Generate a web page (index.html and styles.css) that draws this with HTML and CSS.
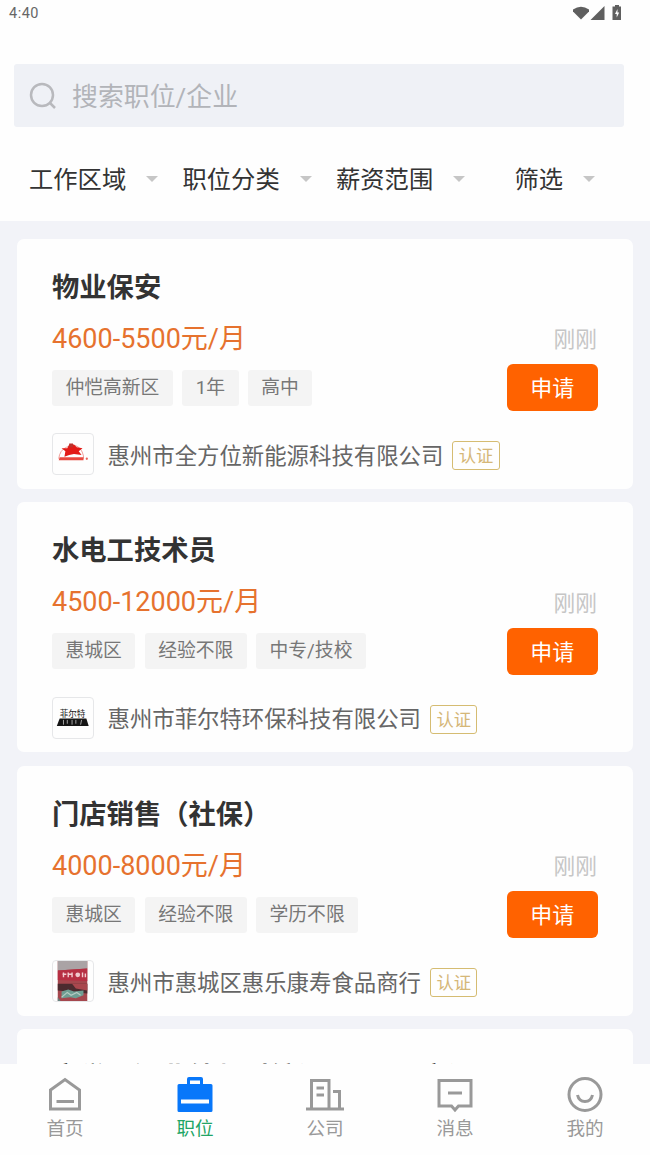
FILE: index.html
```html
<!DOCTYPE html>
<html lang="zh-CN">
<head>
<meta charset="utf-8">
<title>职位</title>
<link rel="stylesheet" href="styles.css">
</head>
<body>
<div class="app">
  <header class="top">
    <div class="status">
      <span>4:40</span>
      <svg class="status-icons" width="52" height="18" viewBox="0 0 52 18">
        <path d="M0 4.500Q8 -1 16 4.500V6.500L8 14.500 0 6.500Z"/>
        <path d="M31.500 1V15H17.500Z"/>
        <path fill-rule="evenodd" d="M42 1.500V0H46V1.500H48V15H39.500V1.500ZM44.500 4 42 9H43.700V12.500L46.200 7.500H44.500Z"/>
      </svg>
    </div>
    <div class="search">
      <svg width="28" height="28" viewBox="0 0 28 28"><circle cx="13" cy="13" r="11"/><path d="M20.500 20.500l5.500 5.500"/></svg>
      <span>搜索职位/企业</span>
    </div>
    <nav class="filters">
      <span class="filter">工作区域<i class="caret"></i></span>
      <span class="filter">职位分类<i class="caret"></i></span>
      <span class="filter">薪资范围<i class="caret"></i></span>
      <span class="filter last">筛选<i class="caret"></i></span>
    </nav>
  </header>

  <main class="list">
    <article class="card">
      <h2>物业保安</h2>
      <div class="row pay-row"><span class="pay">4600-5500元/月</span><span class="time">刚刚</span></div>
      <div class="row"><div class="tags"><span>仲恺高新区</span><span>1年</span><span>高中</span></div><button class="apply">申请</button></div>
      <div class="company">
        <svg class="logo" viewBox="0 0 42 42"><path d="M6 26q1-9 8-12 5-3 9-2 7 2 9 11v3" fill="none" stroke="#ef9c98" stroke-width="1"/><path d="M7 24.500H32V27.500H6Z" fill="#e8483f"/><path d="M9 15l6 0 2-4h5l3 3 6 1-4 3 3 4-8-1-5 1-5 2 1-6Z" fill="#e31b17"/><path d="M17 10h4v4h-4z" fill="#b9342e"/><circle cx="35.500" cy="26" r="1.200" fill="#e8655e"/></svg>
        <span class="name">惠州市全方位新能源科技有限公司</span><span class="badge">认证</span>
      </div>
    </article>
    <article class="card">
      <h2>水电工技术员</h2>
      <div class="row pay-row"><span class="pay">4500-12000元/月</span><span class="time">刚刚</span></div>
      <div class="row"><div class="tags"><span>惠城区</span><span>经验不限</span><span>中专/技校</span></div><button class="apply">申请</button></div>
      <div class="company">
        <svg class="logo" viewBox="0 0 42 42"><text class="logo-text" x="7" y="20">菲尔特</text><path d="M7 21.500H35L37.500 29.500H4Z" fill="#151515"/><path d="M11 23v5M15 23v4M20 23v5M24 23v4M30 23l-1 5" stroke="#aaa" stroke-width="1"/></svg>
        <span class="name">惠州市菲尔特环保科技有限公司</span><span class="badge">认证</span>
      </div>
    </article>
    <article class="card">
      <h2>门店销售（社保）</h2>
      <div class="row pay-row"><span class="pay">4000-8000元/月</span><span class="time">刚刚</span></div>
      <div class="row"><div class="tags"><span>惠城区</span><span>经验不限</span><span>学历不限</span></div><button class="apply">申请</button></div>
      <div class="company">
        <svg class="logo" viewBox="0 0 42 42"><path d="M5 0H36V42H5Z" fill="#a5474e"/><path d="M5 0H36V8L5 10Z" fill="#aaa3a5"/><path d="M5 10 36 8V21L5 20Z" fill="#b72f43"/><path d="M11 12v5M10 14h4M16 12v5M16 14h4M20 12v5M31 12v5M34 13v4" stroke="#f2cbd0" stroke-width="1.500"/><circle cx="26" cy="14.500" r="2.500" fill="#f0c9ce"/><path d="M5 24H36V34L5 31Z" fill="#4b2b2f"/><path d="M20 24H36V31L24 29Z" fill="#a9474e"/><path d="M9 32l7-2 6 2 10-1v5l-8 3-6-1-9 1Z" fill="#6f9e93"/><path d="M9 38l6-5 4 3 6-3 4 3" fill="none" stroke="#b5cbc2" stroke-width="1.200"/><path d="M5 24V38l3 4H5Z" fill="#65837f"/></svg>
        <span class="name">惠州市惠城区惠乐康寿食品商行</span><span class="badge">认证</span>
      </div>
    </article>
    <article class="card next">
      <h2>文学、湖北幼师对编课　　、　实训</h2>
    </article>
  </main>

  <nav class="tabs">
    <a class="tab"><svg viewBox="0 0 40 40"><path d="M5.500 15 20 4.500 34.500 15V34H5.500ZM11.500 26.500H29"/></svg>首页</a>
    <a class="tab active"><svg viewBox="0 0 40 40"><path class="solid" fill-rule="evenodd" d="M12 9V4Q12 2 14 2H26Q28 2 28 4V9H36Q37.500 9 37.500 10.500V35.500Q37.500 37 36 37H4Q2.500 37 2.500 35.500V10.500Q2.500 9 4 9ZM15 5.500V9H25V5.500ZM6 24.500V28.500H34V24.500Z"/></svg>职位</a>
    <a class="tab"><svg viewBox="0 0 40 40"><path d="M1 34H39M6.500 34V5.500H24V34M11.500 13H19M11.500 20H19M28 16.500H34.500V34"/></svg>公司</a>
    <a class="tab"><svg viewBox="0 0 40 40"><path d="M4 5.500H36V31H23.500L20 35 16.500 31H4ZM13 18H27"/></svg>消息</a>
    <a class="tab"><svg viewBox="0 0 40 40"><circle cx="20" cy="19.500" r="16"/><path d="M12.500 20Q14 26.500 20 26.500T27.500 20"/></svg>我的</a>
  </nav>
</div>
</body>
</html>
```
FILE: styles.css
```css
* { box-sizing: border-box; }
body { margin: 0; font-family: Roboto, "Noto Sans CJK SC", sans-serif; color: #333; background: #f2f3f8; }
.app { height: 1155px; display: flex; flex-direction: column; overflow: hidden; }
.top { height: 221px; flex: none; background: #fefefe; }
.status { height: 64px; padding: 5px 25px 0 9px; display: flex; justify-content: space-between; align-items: flex-start; font-size: 14.500px; line-height: 17px; letter-spacing: .5px; color: #666; }
.status-icons { fill: #5f5f5f; }
.search { height: 63px; margin: 0 26px 0 14px; padding-left: 15px; display: flex; align-items: center; gap: 15px; border-radius: 3px; background: #eff1f6; color: #b2b4b9; font-size: 25.900px; }
.search span { padding-bottom: 2px; }
.search svg { fill: none; stroke: #b8b9bd; stroke-width: 2.500; }
.filters { display: flex; height: 94px; padding: 7px 0 0 29px; align-items: center; gap: 24.500px; font-size: 24.300px; white-space: nowrap; }
.filter { display: flex; align-items: center; justify-content: space-between; width: 129px; }
.filter.last { width: 80px; margin-left: 25px; }
.caret { border: 6.500px solid transparent; border-top-color: #c6c6c6; border-bottom: 0; margin-top: 2px; }
.list { flex: 1; min-height: 0; overflow: hidden; padding: 17.500px 17px 0; display: flex; flex-direction: column; gap: 13.200px; }
.card { height: 250.400px; flex: none; border-radius: 7px; background: #fefefe; padding: 29px 35px 0; }
.card.next { padding-top: 29px; }
h2 { margin: 0; font-size: 27.300px; line-height: 40px; font-weight: 700; white-space: nowrap; }
.row { display: flex; justify-content: space-between; align-items: center; height: 47px; }
.pay-row { height: 40px; margin: 10px 0 6.500px; }
.pay { font-size: 27px; color: #e6722e; padding-bottom: 3px; }
.time { font-size: 21.700px; color: #c6c6c6; margin-right: 1px; }
.tags { display: flex; gap: 9.300px; }
.tags span { height: 36px; line-height: 37px; padding: 0 13.500px; font-size: 18.800px; color: #777; background: #f4f4f4; border-radius: 3px; white-space: nowrap; }
.apply { width: 91.500px; height: 47px; border: 0; padding: 0 0 3px; border-radius: 6px; background: #ff6200; color: #fff; font: 22px Roboto, "Noto Sans CJK SC", sans-serif; }
.company { display: flex; align-items: center; height: 42px; margin-top: 22px; }
.logo { width: 42px; height: 42px; border: 1px solid #e6e7e9; border-radius: 4px; margin-right: 13.500px; }
.logo-text { font: 9px "Noto Sans CJK SC", sans-serif; fill: #222; }
.name { font-size: 22.400px; color: #666; padding-bottom: 1px; }
.badge { width: 47.500px; height: 29px; margin: 3px 0 0 9px; border: 1.500px solid #d5bc72; border-radius: 3px; text-align: center; line-height: 28px; font-size: 17.300px; color: #d5b778; }
.tabs { height: 91px; flex: none; background: #fefefe; display: grid; grid-template-columns: repeat(5, 1fr); }
.tab { display: flex; flex-direction: column; align-items: center; padding-top: 11px; font-size: 18.600px; line-height: 28px; color: #999; }
.tab svg { width: 40px; height: 40px; fill: none; stroke: #999; stroke-width: 3; }
.tab .solid { fill: #0877fa; stroke: none; }
.active { color: #22a565; }
```
